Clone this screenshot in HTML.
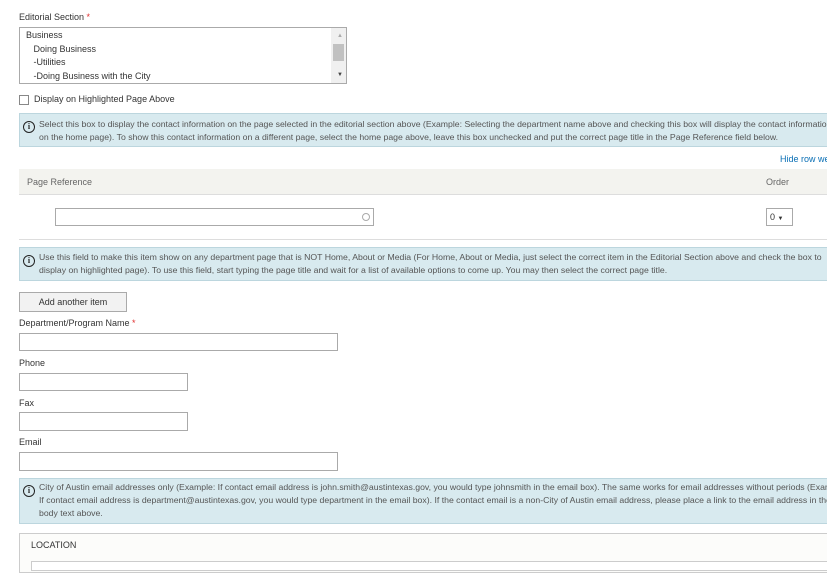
<!DOCTYPE html>
<html><head><meta charset="utf-8"><style>
*{box-sizing:border-box;margin:0;padding:0}
body{width:827px;height:565px;overflow:hidden;background:#fff;font-family:"Liberation Sans",sans-serif;color:#333;font-size:9px;position:relative}
.a{position:absolute}
.lbl{font-size:9px;color:#333}
.req{color:#e0302f}
.inp{border:1px solid #aaa;background:#fff}
.info{position:absolute;left:19px;width:820px;background:#d8eaef;border:1px solid #bcd6de;color:#555;font-family:"Liberation Sans",sans-serif;font-size:8.7px;line-height:13px;padding:3px 0 0 19px;white-space:nowrap;overflow:hidden}
.ic{position:absolute;left:3px;width:12px;height:12px;border:1.5px solid #222;border-radius:50%;font:bold 8px/9px "Liberation Serif",serif;text-align:center;color:#222}
</style></head><body>
<div class="a lbl" style="left:19px;top:12px">Editorial Section <span class="req">*</span></div>
<div class="a inp" style="left:19px;top:27px;width:328px;height:57px;font-size:9px;line-height:13.5px;color:#333;padding:1px 0 0 6px">
Business<br>&nbsp;&nbsp;&nbsp;Doing Business<br>&nbsp;&nbsp;&nbsp;-Utilities<br>&nbsp;&nbsp;&nbsp;-Doing Business with the City
<div class="a" style="right:0;top:0;width:15px;height:55px;background:#f0f0f0"></div>
<div class="a" style="right:2px;top:16px;width:11px;height:17px;background:#c1c1c1"></div>
<div class="a" style="right:3px;top:2px;font-size:6px;color:#aaa">▲</div>
<div class="a" style="right:3px;top:41px;font-size:6px;color:#444">▼</div>
</div>
<div class="a" style="left:19px;top:95px;width:10px;height:10px;border:1px solid #888"></div>
<div class="a lbl" style="left:34px;top:94px">Display on Highlighted Page Above</div>
<div class="info" style="top:113px;height:34px;padding-top:4px"><div class="ic" style="top:7px">i</div>Select this box to display the contact information on the page selected in the editorial section above (Example: Selecting the department name above and checking this box will display the contact information<br>on the home page). To show this contact information on a different page, select the home page above, leave this box unchecked and put the correct page title in the Page Reference field below.</div>
<div class="a" style="left:780px;top:154px;color:#0a6fb5;font-size:9px;white-space:nowrap">Hide row weights</div>
<div class="a" style="left:19px;top:169px;width:808px;height:26px;background:#f3f3ef;border-bottom:1px solid #ddd"></div>
<div class="a" style="left:27px;top:177px;color:#666;font-size:9px">Page Reference</div>
<div class="a" style="left:766px;top:177px;color:#666;font-size:9px">Order</div>
<div class="a inp" style="left:55px;top:208px;width:319px;height:18px"><div class="a" style="right:3px;top:4px;width:8px;height:8px;border:1px solid #aaa;border-radius:50%"></div></div>
<div class="a inp" style="left:766px;top:208px;width:27px;height:18px;font-size:9px;padding:3px 3px;color:#333">0 <span style="font-size:6px">▼</span></div>
<div class="a" style="left:19px;top:239px;width:808px;height:1px;background:#ddd"></div>
<div class="info" style="top:247px;height:34px"><div class="ic" style="top:7px">i</div>Use this field to make this item show on any department page that is NOT Home, About or Media (For Home, About or Media, just select the correct item in the Editorial Section above and check the box to<br>display on highlighted page). To use this field, start typing the page title and wait for a list of available options to come up. You may then select the correct page title.</div>
<div class="a" style="left:19px;top:292px;width:108px;height:20px;border:1px solid #aaa;background:#f2f2f2;font-size:9px;text-align:center;line-height:18px;color:#333">Add another item</div>
<div class="a lbl" style="left:19px;top:318px">Department/Program Name <span class="req">*</span></div>
<div class="a inp" style="left:19px;top:333px;width:319px;height:18px"></div>
<div class="a lbl" style="left:19px;top:358px">Phone</div>
<div class="a inp" style="left:19px;top:373px;width:169px;height:18px"></div>
<div class="a lbl" style="left:19px;top:398px">Fax</div>
<div class="a inp" style="left:19px;top:412px;width:169px;height:19px"></div>
<div class="a lbl" style="left:19px;top:437px">Email</div>
<div class="a inp" style="left:19px;top:452px;width:319px;height:19px"></div>
<div class="info" style="top:478px;height:46px;padding-top:2px"><div class="ic" style="top:6px">i</div>City of Austin email addresses only (Example: If contact email address is john.smith@austintexas.gov, you would type johnsmith in the email box). The same works for email addresses without periods (Example:<br>If contact email address is department@austintexas.gov, you would type department in the email box). If the contact email is a non-City of Austin email address, please place a link to the email address in the<br>body text above.</div>
<div class="a" style="left:19px;top:533px;width:820px;height:40px;border:1px solid #ccc;background:#fcfcfa"></div>
<div class="a" style="left:31px;top:540px;font-size:9px;color:#333">LOCATION</div>
<div class="a" style="left:31px;top:561px;width:800px;height:10px;border:1px solid #ccc;background:#fff"></div>
</body></html>
